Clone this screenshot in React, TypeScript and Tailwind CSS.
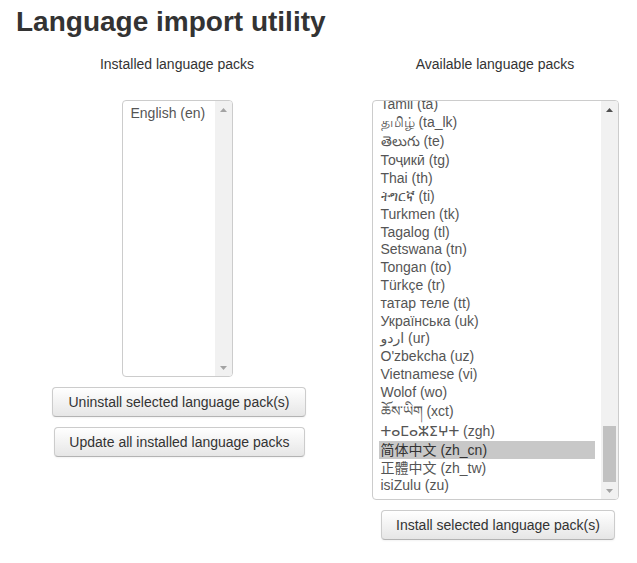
import React from "react";

type Row = { label: string; h: string; sel?: boolean };

const rows: Row[] = [
  { label: "Tamil (ta)", h: "h-[18px]" },
  { label: "தமிழ் (ta_lk)", h: "h-[18.5px]" },
  { label: "తెలుగు (te)", h: "h-[19px]" },
  { label: "Тоҷикӣ (tg)", h: "h-[18.5px]" },
  { label: "Thai (th)", h: "h-[18px]" },
  { label: "ትግርኛ (ti)", h: "h-[18px]" },
  { label: "Turkmen (tk)", h: "h-[18px]" },
  { label: "Tagalog (tl)", h: "h-[17.5px]" },
  { label: "Setswana (tn)", h: "h-[17.5px]" },
  { label: "Tongan (to)", h: "h-[18px]" },
  { label: "Türkçe (tr)", h: "h-[18px]" },
  { label: "татар теле (tt)", h: "h-[18px]" },
  { label: "Українська (uk)", h: "h-[17.5px]" },
  { label: "اردو (ur)", h: "h-[17.5px]" },
  { label: "O'zbekcha (uz)", h: "h-[18px]" },
  { label: "Vietnamese (vi)", h: "h-[18px]" },
  { label: "Wolof (wo)", h: "h-[18px]" },
  { label: "ཆོས་ཡིག (xct)", h: "h-[20px]" },
  { label: "ⵜⴰⵎⴰⵣⵉⵖⵜ (zgh)", h: "h-[20px]" },
  { label: "简体中文 (zh_cn)", h: "h-[18px]", sel: true },
  { label: "正體中文 (zh_tw)", h: "h-[17px]" },
  { label: "isiZulu (zu)", h: "h-[18px]" },
];

function Arrow({ up, dark }: { up: boolean; dark: boolean }) {
  return (
    <div className="h-[17px] flex items-center justify-center">
      <svg width="7" height="4" viewBox="0 0 7 4">
        <polygon
          points={up ? "3.5,0 7,4 0,4" : "0,0 7,0 3.5,4"}
          fill={dark ? "#505050" : "#a3a3a3"}
        />
      </svg>
    </div>
  );
}

function Btn({ children, extra }: { children: React.ReactNode; extra: string }) {
  return (
    <button
      className={
        "h-[30px] text-[14px] leading-[20px] text-[#333] rounded-[4px] border border-[#ccc] border-b-[#b3b3b3] bg-linear-to-b from-white to-[#e6e6e6] shadow-[inset_0_1px_0_rgba(255,255,255,0.2),0_1px_2px_rgba(0,0,0,0.05)] whitespace-nowrap " +
        extra
      }
    >
      {children}
    </button>
  );
}

export default function App() {
  return (
    <div className="w-[637px] h-[563px] bg-white text-[#333] font-[family-name:'Liberation_Sans','DejaVu_Sans','Noto_Sans_CJK_SC',sans-serif] pt-[5px] overflow-hidden">
      <h1 className="pl-[16px] text-[28px] leading-[34px] font-bold text-[#333]">
        Language import utility
      </h1>
      <div className="flex mt-[15px]">
        {/* Left column */}
        <div className="ml-[15px] w-[324px] flex flex-col items-center">
          <div className="text-[14px] leading-[20px]">Installed language packs</div>
          <div className="mt-[26px] w-[111px] h-[277px] border border-[#ccc] rounded-[4px] overflow-hidden flex bg-white">
            <div className="flex-1 pl-[6px] pr-[2px] pt-[3px] text-[14px] text-[#555]">
              <div className="h-[18px] leading-[18px] px-[2px] whitespace-nowrap">English (en)</div>
            </div>
            <div className="w-[17px] bg-[#f1f1f1] flex flex-col">
              <Arrow up dark={false} />
              <div className="flex-1" />
              <Arrow up={false} dark={false} />
            </div>
          </div>
          <Btn extra="mt-[10px] ml-[4px] px-[15px]">Uninstall selected language pack(s)</Btn>
          <Btn extra="mt-[10px] ml-[5px] px-[14px]">Update all installed language packs</Btn>
        </div>
        {/* Right column */}
        <div className="ml-[16px] w-[280px] flex flex-col items-center">
          <div className="text-[14px] leading-[20px]">Available language packs</div>
          <div className="mt-[26px] w-[247px] h-[400px] border border-[#ccc] rounded-[4px] overflow-hidden flex bg-white">
            <div className="flex-1 pl-[6px] pr-[6px] overflow-hidden text-[14px] text-[#555]">
              <div className="mt-[-6px]">
                {rows.map((r) => (
                  <div
                    key={r.label}
                    className={
                      r.h +
                      " flex items-center px-[2px] whitespace-nowrap leading-[18px] " +
                      (r.sel ? "bg-[#c8c8c8] text-[#333]" : "")
                    }
                  >
                    {r.label}
                  </div>
                ))}
              </div>
            </div>
            <div className="w-[17px] bg-[#f1f1f1] flex flex-col">
              <Arrow up dark />
              <div className="flex-1 flex flex-col justify-end">
                <div className="h-[56px] mx-[2px] bg-[#c1c1c1]" />
              </div>
              <Arrow up={false} dark={false} />
            </div>
          </div>
          <Btn extra="mt-[10px] ml-[6px] px-[14px]">Install selected language pack(s)</Btn>
        </div>
      </div>
    </div>
  );
}
